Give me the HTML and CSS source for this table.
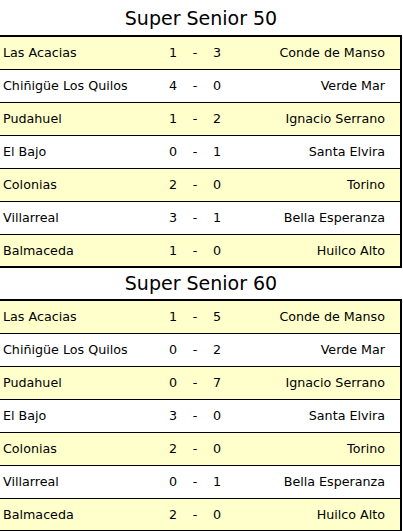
FILE: index.html
```html
<!DOCTYPE html>
<html>
<head>
<meta charset="utf-8">
<link rel="stylesheet" href="styles.css">
</head>
<body>
<h2 class="title first">Super Senior 50</h2>
<table class="results">
<colgroup><col class="c-home"><col class="c-s"><col class="c-d"><col class="c-s"><col class="c-away"></colgroup>
<tr class="odd"><td class="home">Las Acacias</td><td class="sc">1</td><td class="sc">-</td><td class="sc">3</td><td class="away">Conde de Manso</td></tr>
<tr class="even"><td class="home">Chiñigüe Los Quilos</td><td class="sc">4</td><td class="sc">-</td><td class="sc">0</td><td class="away">Verde Mar</td></tr>
<tr class="odd"><td class="home">Pudahuel</td><td class="sc">1</td><td class="sc">-</td><td class="sc">2</td><td class="away">Ignacio Serrano</td></tr>
<tr class="even"><td class="home">El Bajo</td><td class="sc">0</td><td class="sc">-</td><td class="sc">1</td><td class="away">Santa Elvira</td></tr>
<tr class="odd"><td class="home">Colonias</td><td class="sc">2</td><td class="sc">-</td><td class="sc">0</td><td class="away">Torino</td></tr>
<tr class="even"><td class="home">Villarreal</td><td class="sc">3</td><td class="sc">-</td><td class="sc">1</td><td class="away">Bella Esperanza</td></tr>
<tr class="odd"><td class="home">Balmaceda</td><td class="sc">1</td><td class="sc">-</td><td class="sc">0</td><td class="away">Huilco Alto</td></tr>
</table>
<h2 class="title">Super Senior 60</h2>
<table class="results">
<colgroup><col class="c-home"><col class="c-s"><col class="c-d"><col class="c-s"><col class="c-away"></colgroup>
<tr class="odd"><td class="home">Las Acacias</td><td class="sc">1</td><td class="sc">-</td><td class="sc">5</td><td class="away">Conde de Manso</td></tr>
<tr class="even"><td class="home">Chiñigüe Los Quilos</td><td class="sc">0</td><td class="sc">-</td><td class="sc">2</td><td class="away">Verde Mar</td></tr>
<tr class="odd"><td class="home">Pudahuel</td><td class="sc">0</td><td class="sc">-</td><td class="sc">7</td><td class="away">Ignacio Serrano</td></tr>
<tr class="even"><td class="home">El Bajo</td><td class="sc">3</td><td class="sc">-</td><td class="sc">0</td><td class="away">Santa Elvira</td></tr>
<tr class="odd"><td class="home">Colonias</td><td class="sc">2</td><td class="sc">-</td><td class="sc">0</td><td class="away">Torino</td></tr>
<tr class="even"><td class="home">Villarreal</td><td class="sc">0</td><td class="sc">-</td><td class="sc">1</td><td class="away">Bella Esperanza</td></tr>
<tr class="odd"><td class="home">Balmaceda</td><td class="sc">2</td><td class="sc">-</td><td class="sc">0</td><td class="away">Huilco Alto</td></tr>
</table>
</body>
</html>
```
FILE: styles.css
```css
html, body {
  margin: 0;
  padding: 0;
  background: #fff;
}
body {
  font-family: "DejaVu Sans", Verdana, sans-serif;
  color: #000;
  width: 402px;
}
.title {
  margin: 0;
  height: 31px;
  line-height: 31px;
  font-size: 19px;
  font-weight: normal;
  text-align: center;
}
.title.first {
  height: 35px;
  line-height: 36px;
}
.results {
  width: 402px;
  border-collapse: collapse;
  table-layout: fixed;
  border-top: 2px solid #000;
  border-bottom: 2px solid #000;
  border-right: 2px solid #000;
  font-size: 12.7px;
}
.c-home { width: 161px; }
.c-s { width: 24px; }
.c-d { width: 20px; }
.results tr { height: 33px; }
.results tr + tr td { border-top: 1px solid #000; }
.results td {
  padding: 0;
  white-space: nowrap;
}
.odd { background: #ffffcc; }
.even { background: #fff; }
.home { padding-left: 3px !important; }
.sc { text-align: center; }
.away {
  text-align: right;
  padding-right: 15px !important;
}
```
